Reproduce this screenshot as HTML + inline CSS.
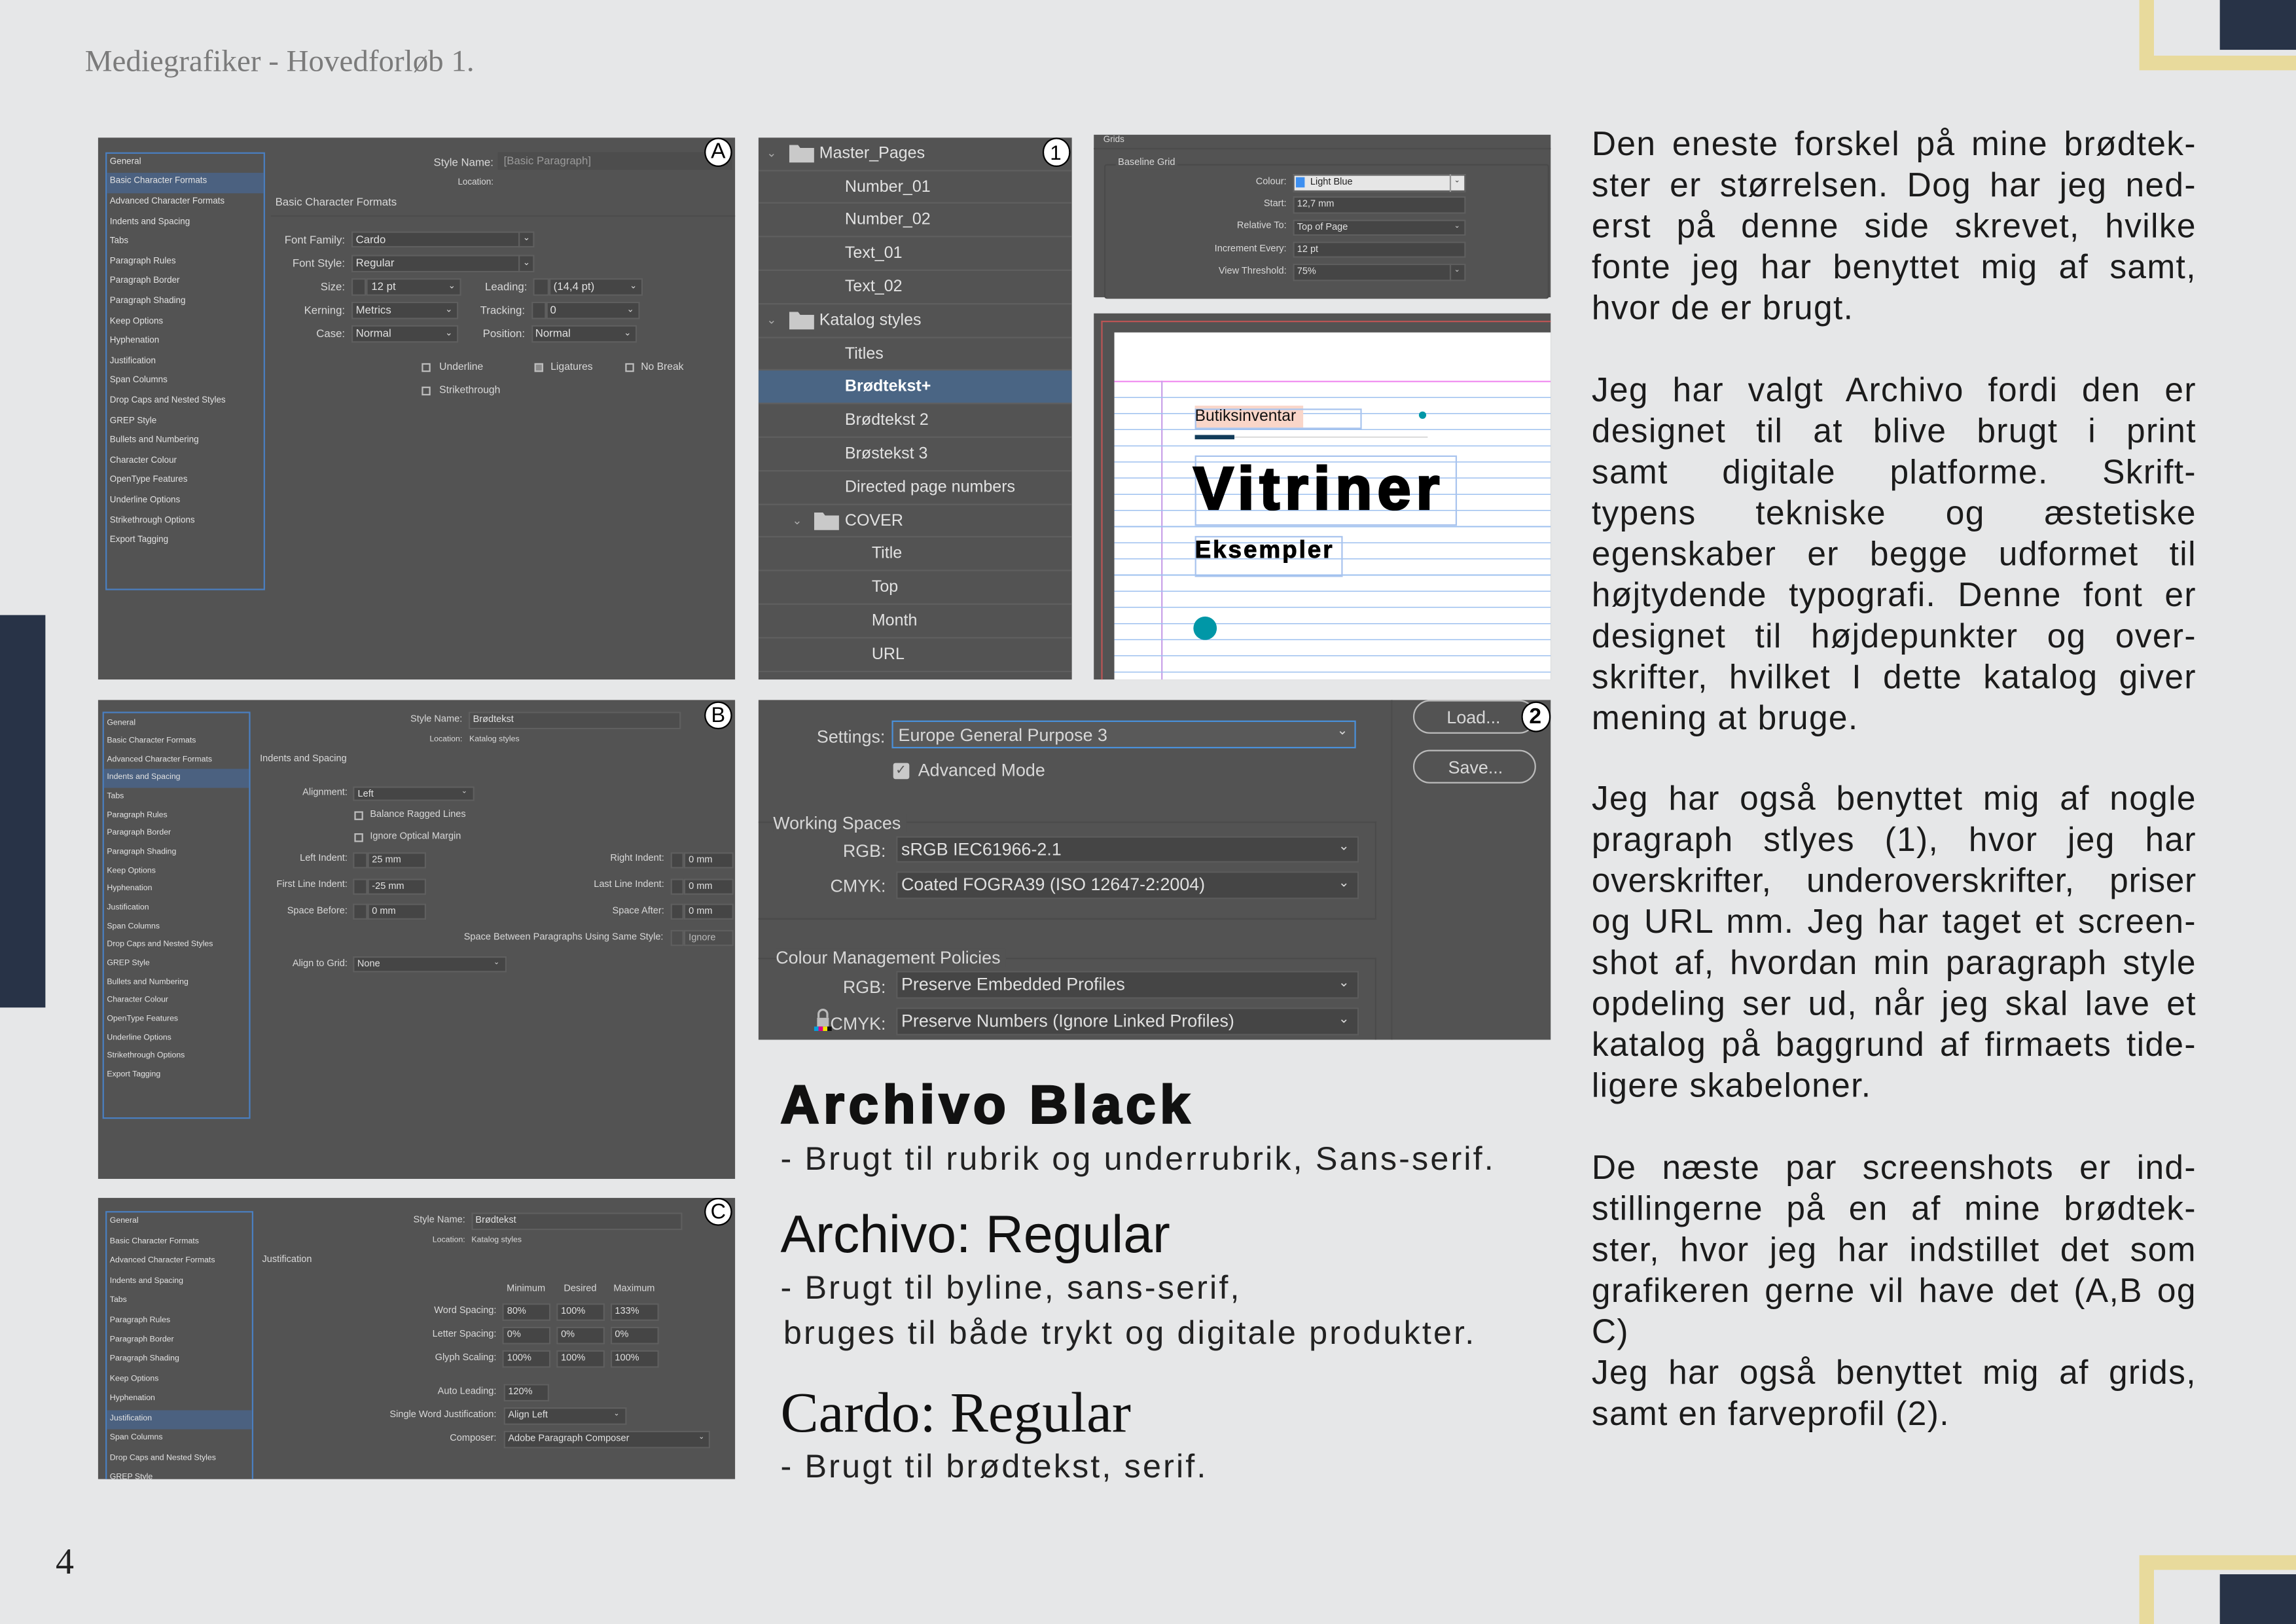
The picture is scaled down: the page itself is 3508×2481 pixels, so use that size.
<!DOCTYPE html>
<html><head><meta charset="utf-8">
<style>
html,body{margin:0;padding:0;width:3508px;height:2480px;overflow:hidden;background:#e6e7e8}
#w{position:absolute;left:0;top:0;width:1568px;height:1109px;transform:scale(2.23724);transform-origin:0 0;background:#e6e7e8;font-family:"Liberation Sans",sans-serif}
.a{position:absolute}
.c{position:absolute;transform:translateY(-50%);white-space:nowrap;line-height:1}
.r{position:absolute;transform:translate(-100%,-50%);white-space:nowrap;line-height:1}
.p{position:absolute;background:#535353}
.sb{position:absolute;border:1px solid #4a7fc1;box-sizing:border-box;background:#535353;overflow:hidden}
.sb div{color:#e2e2e2;white-space:nowrap;padding-left:2px}
.sb .h{background:#4b6180}
.f{position:absolute;background:#454545;border:1px solid #5f5f5f;box-sizing:border-box;color:#e0e0e0;white-space:nowrap;overflow:hidden}
.cb{position:absolute;border:1px solid #bdbdbd;box-sizing:border-box;width:6px;height:6px}
.circ{position:absolute;border-radius:50%;background:#fff;border:1.3px solid #000;box-sizing:border-box;color:#000;text-align:center;font-family:"Liberation Sans",sans-serif}
.dk{color:#d8d8d8}
.rt{position:absolute;left:1087px;width:413px;height:28px;line-height:28px;font-size:23px;color:#1b1b1b;text-align:justify;text-align-last:justify;letter-spacing:.6px;white-space:nowrap}
.rt.l{text-align-last:left}
.row{height:22.8px;line-height:22.8px;border-bottom:1px solid #5f5f5f;box-sizing:border-box;color:#e2e2e2;font-size:11.2px;position:relative;white-space:nowrap}
.s{position:absolute;transform:translateY(-50%);white-space:nowrap;line-height:1;font-size:22.5px;color:#222;letter-spacing:1.4px}
</style></head><body><div id="w">

<div class="c" style="left:58px;top:42px;font-family:'Liberation Serif',serif;font-size:21px;color:#7b7b7b">Mediegrafiker - Hovedforløb 1.</div>
<div class="c" style="left:38px;top:1067px;font-family:'Liberation Serif',serif;font-size:25px;color:#222">4</div>

<div class="a" style="left:0;top:420px;width:31px;height:268px;background:#283347"></div>
<div class="a" style="left:1461px;top:0;width:107px;height:48px;background:#e8da9c"></div>
<div class="a" style="left:1471px;top:0;width:97px;height:38px;background:#e6e7e8"></div>
<div class="a" style="left:1516px;top:0;width:52px;height:34px;background:#283347"></div>
<div class="a" style="left:1461px;top:1062px;width:107px;height:47px;background:#e8da9c"></div>
<div class="a" style="left:1471px;top:1072px;width:97px;height:37px;background:#e6e7e8"></div>
<div class="a" style="left:1516px;top:1075px;width:52px;height:34px;background:#283347"></div>

<!-- PANEL A -->
<div class="p" style="left:67px;top:94px;width:435px;height:370px"></div>
<div class="sb" style="left:72px;top:103.5px;width:109px;height:299px;padding-top:.4px;font-size:6px">
<div style="height:13.6px;line-height:13.6px">General</div>
<div class="h" style="height:13.6px;line-height:13.6px">Basic Character Formats</div>
<div style="height:13.6px;line-height:13.6px">Advanced Character Formats</div>
<div style="height:13.6px;line-height:13.6px">Indents and Spacing</div>
<div style="height:13.6px;line-height:13.6px">Tabs</div>
<div style="height:13.6px;line-height:13.6px">Paragraph Rules</div>
<div style="height:13.6px;line-height:13.6px">Paragraph Border</div>
<div style="height:13.6px;line-height:13.6px">Paragraph Shading</div>
<div style="height:13.6px;line-height:13.6px">Keep Options</div>
<div style="height:13.6px;line-height:13.6px">Hyphenation</div>
<div style="height:13.6px;line-height:13.6px">Justification</div>
<div style="height:13.6px;line-height:13.6px">Span Columns</div>
<div style="height:13.6px;line-height:13.6px">Drop Caps and Nested Styles</div>
<div style="height:13.6px;line-height:13.6px">GREP Style</div>
<div style="height:13.6px;line-height:13.6px">Bullets and Numbering</div>
<div style="height:13.6px;line-height:13.6px">Character Colour</div>
<div style="height:13.6px;line-height:13.6px">OpenType Features</div>
<div style="height:13.6px;line-height:13.6px">Underline Options</div>
<div style="height:13.6px;line-height:13.6px">Strikethrough Options</div>
<div style="height:13.6px;line-height:13.6px">Export Tagging</div>
</div>
<div class="r dk" style="left:337px;top:110.5px;font-size:7.5px">Style Name:</div>
<div class="a" style="left:340px;top:104px;width:160px;height:12px;background:#4d4d4d"></div>
<div class="c" style="left:344px;top:110px;font-size:7.5px;color:#9a9a9a">[Basic Paragraph]</div>
<div class="r dk" style="left:337px;top:125px;font-size:6px">Location:</div>
<div class="c dk" style="left:188px;top:138px;font-size:7.5px">Basic Character Formats</div>
<div class="a" style="left:185px;top:147px;width:317px;height:1px;background:#4c4c4c"></div>

<div class="r dk" style="left:235.6px;top:163.8px;font-size:7.5px">Font Family:</div>
<div class="f" style="left:240px;top:157.7px;width:125px;height:11.7px;font-size:7.5px;line-height:10px;padding-left:2px">Cardo</div>
<div class="a" style="left:354px;top:158px;width:1px;height:11px;background:#5f5f5f"></div>
<div class="c dk" style="left:357px;top:163px;font-size:6px">⌄</div>
<div class="r dk" style="left:235.6px;top:180.3px;font-size:7.5px">Font Style:</div>
<div class="f" style="left:240px;top:174px;width:125px;height:11.7px;font-size:7.5px;line-height:10px;padding-left:2px">Regular</div>
<div class="a" style="left:354px;top:174px;width:1px;height:11px;background:#5f5f5f"></div>
<div class="c dk" style="left:357px;top:179.5px;font-size:6px">⌄</div>

<div class="r dk" style="left:235.6px;top:196px;font-size:7.5px">Size:</div>
<div class="f" style="left:240px;top:190px;width:9.6px;height:12px"></div>
<div class="f" style="left:249.6px;top:190px;width:65px;height:12px;font-size:7.5px;line-height:10px;padding-left:3px">12 pt</div>
<div class="c dk" style="left:306px;top:195.5px;font-size:6px">⌄</div>
<div class="r dk" style="left:360px;top:196px;font-size:7.5px">Leading:</div>
<div class="f" style="left:364px;top:190px;width:11px;height:12px"></div>
<div class="f" style="left:375px;top:190px;width:64px;height:12px;font-size:7.5px;line-height:10px;padding-left:2px">(14,4 pt)</div>
<div class="c dk" style="left:430px;top:195.5px;font-size:6px">⌄</div>

<div class="r dk" style="left:235.6px;top:212.2px;font-size:7.5px">Kerning:</div>
<div class="f" style="left:240px;top:206.2px;width:73px;height:12px;font-size:7.5px;line-height:10px;padding-left:2px">Metrics</div>
<div class="c dk" style="left:304px;top:211.5px;font-size:6px">⌄</div>
<div class="r dk" style="left:358.5px;top:212.2px;font-size:7.5px">Tracking:</div>
<div class="f" style="left:362.7px;top:206.2px;width:10px;height:12px"></div>
<div class="f" style="left:372.7px;top:206.2px;width:64.3px;height:12px;font-size:7.5px;line-height:10px;padding-left:2px">0</div>
<div class="c dk" style="left:428px;top:211.5px;font-size:6px">⌄</div>

<div class="r dk" style="left:235.6px;top:228px;font-size:7.5px">Case:</div>
<div class="f" style="left:240px;top:222px;width:73px;height:12px;font-size:7.5px;line-height:10px;padding-left:2px">Normal</div>
<div class="c dk" style="left:304px;top:227.5px;font-size:6px">⌄</div>
<div class="r dk" style="left:358.5px;top:228px;font-size:7.5px">Position:</div>
<div class="f" style="left:362.5px;top:222px;width:72.5px;height:12px;font-size:7.5px;line-height:10px;padding-left:2px">Normal</div>
<div class="c dk" style="left:426px;top:227.5px;font-size:6px">⌄</div>

<div class="cb" style="left:288.4px;top:247.5px"></div><div class="c dk" style="left:300px;top:250.5px;font-size:7px">Underline</div>
<div class="cb" style="left:365.3px;top:247.5px;background:#8a8a8a"></div><div class="c dk" style="left:376px;top:250.5px;font-size:7px">Ligatures</div>
<div class="cb" style="left:426.7px;top:247.5px"></div><div class="c dk" style="left:437.7px;top:250.5px;font-size:7px">No Break</div>
<div class="cb" style="left:288.4px;top:263.5px"></div><div class="c dk" style="left:300px;top:266.5px;font-size:7px">Strikethrough</div>
<div class="circ" style="left:481px;top:93.5px;width:19px;height:20px;font-size:15px;line-height:18px">A</div>

<!-- PANEL B -->
<div class="p" style="left:67px;top:477.5px;width:435px;height:327px"></div>
<div class="sb" style="left:70px;top:486px;width:101px;height:278px;padding-top:.5px;font-size:5.5px">
<div style="height:12.66px;line-height:12.66px">General</div>
<div style="height:12.66px;line-height:12.66px">Basic Character Formats</div>
<div style="height:12.66px;line-height:12.66px">Advanced Character Formats</div>
<div class="h" style="height:12.66px;line-height:12.66px">Indents and Spacing</div>
<div style="height:12.66px;line-height:12.66px">Tabs</div>
<div style="height:12.66px;line-height:12.66px">Paragraph Rules</div>
<div style="height:12.66px;line-height:12.66px">Paragraph Border</div>
<div style="height:12.66px;line-height:12.66px">Paragraph Shading</div>
<div style="height:12.66px;line-height:12.66px">Keep Options</div>
<div style="height:12.66px;line-height:12.66px">Hyphenation</div>
<div style="height:12.66px;line-height:12.66px">Justification</div>
<div style="height:12.66px;line-height:12.66px">Span Columns</div>
<div style="height:12.66px;line-height:12.66px">Drop Caps and Nested Styles</div>
<div style="height:12.66px;line-height:12.66px">GREP Style</div>
<div style="height:12.66px;line-height:12.66px">Bullets and Numbering</div>
<div style="height:12.66px;line-height:12.66px">Character Colour</div>
<div style="height:12.66px;line-height:12.66px">OpenType Features</div>
<div style="height:12.66px;line-height:12.66px">Underline Options</div>
<div style="height:12.66px;line-height:12.66px">Strikethrough Options</div>
<div style="height:12.66px;line-height:12.66px">Export Tagging</div>
</div>
<div class="r dk" style="left:315.7px;top:492.4px;font-size:6.5px">Style Name:</div>
<div class="f" style="left:320px;top:486.2px;width:144.5px;height:11.8px;font-size:6.5px;line-height:10px;padding-left:2px;background:#4d4d4d">Brødtekst</div>
<div class="r dk" style="left:315.7px;top:506.2px;font-size:5.5px">Location:</div>
<div class="c dk" style="left:320.5px;top:506.2px;font-size:5.5px">Katalog styles</div>
<div class="c dk" style="left:177.5px;top:518.6px;font-size:6.5px">Indents and Spacing</div>
<div class="r dk" style="left:237.3px;top:542px;font-size:6.5px">Alignment:</div>
<div class="f" style="left:241.3px;top:536.6px;width:82.4px;height:10.7px;font-size:6.5px;line-height:9px;padding-left:2px">Left</div>
<div class="c dk" style="left:315px;top:541px;font-size:5px">⌄</div>
<div class="cb" style="left:242px;top:554px;width:5.5px;height:5.5px"></div><div class="c dk" style="left:252.7px;top:557px;font-size:6.5px">Balance Ragged Lines</div>
<div class="cb" style="left:242px;top:569px;width:5.5px;height:5.5px"></div><div class="c dk" style="left:252.7px;top:572px;font-size:6.5px">Ignore Optical Margin</div>

<div class="r dk" style="left:237.3px;top:587.3px;font-size:6.5px">Left Indent:</div>
<div class="f" style="left:241px;top:581.8px;width:10px;height:11px"></div>
<div class="f" style="left:251px;top:581.8px;width:39.6px;height:11px;font-size:6.5px;line-height:9px;padding-left:2px">25 mm</div>
<div class="r dk" style="left:237.3px;top:605.2px;font-size:6.5px">First Line Indent:</div>
<div class="f" style="left:241px;top:599.7px;width:10px;height:11px"></div>
<div class="f" style="left:251px;top:599.7px;width:39.6px;height:11px;font-size:6.5px;line-height:9px;padding-left:2px">-25 mm</div>
<div class="r dk" style="left:237.3px;top:622.8px;font-size:6.5px">Space Before:</div>
<div class="f" style="left:241px;top:617.3px;width:10px;height:11px"></div>
<div class="f" style="left:251px;top:617.3px;width:39.6px;height:11px;font-size:6.5px;line-height:9px;padding-left:2px">0 mm</div>

<div class="r dk" style="left:453.6px;top:587.3px;font-size:6.5px">Right Indent:</div>
<div class="f" style="left:457.6px;top:581.8px;width:9.7px;height:11px"></div>
<div class="f" style="left:467.3px;top:581.8px;width:34.2px;height:11px;font-size:6.5px;line-height:9px;padding-left:2px">0 mm</div>
<div class="r dk" style="left:453.6px;top:605.2px;font-size:6.5px">Last Line Indent:</div>
<div class="f" style="left:457.6px;top:599.7px;width:9.7px;height:11px"></div>
<div class="f" style="left:467.3px;top:599.7px;width:34.2px;height:11px;font-size:6.5px;line-height:9px;padding-left:2px">0 mm</div>
<div class="r dk" style="left:453.6px;top:622.8px;font-size:6.5px">Space After:</div>
<div class="f" style="left:457.6px;top:617.3px;width:9.7px;height:11px"></div>
<div class="f" style="left:467.3px;top:617.3px;width:34.2px;height:11px;font-size:6.5px;line-height:9px;padding-left:2px">0 mm</div>
<div class="r dk" style="left:453px;top:640.7px;font-size:6.5px">Space Between Paragraphs Using Same Style:</div>
<div class="f" style="left:457.6px;top:635.2px;width:9.7px;height:11px;background:#4e4e4e"></div>
<div class="f" style="left:467.3px;top:635.2px;width:34.2px;height:11px;font-size:6.5px;line-height:9px;padding-left:2px;background:#4e4e4e;color:#bbb">Ignore</div>
<div class="r dk" style="left:237.3px;top:658.7px;font-size:6.5px">Align to Grid:</div>
<div class="f" style="left:241px;top:653.2px;width:105px;height:11px;font-size:6.5px;line-height:9px;padding-left:2px">None</div>
<div class="c dk" style="left:337px;top:657.5px;font-size:5px">⌄</div>
<div class="circ" style="left:481px;top:478.5px;width:19px;height:19.5px;font-size:14.5px;line-height:18px">B</div>

<!-- PANEL C -->
<div class="p" style="left:67px;top:817.5px;width:435px;height:192px;overflow:hidden">
<div class="sb" style="left:5px;top:9px;width:100.6px;height:200px;padding-top:.9px;font-size:5.5px">
<div style="height:13.45px;line-height:13.45px">General</div>
<div style="height:13.45px;line-height:13.45px">Basic Character Formats</div>
<div style="height:13.45px;line-height:13.45px">Advanced Character Formats</div>
<div style="height:13.45px;line-height:13.45px">Indents and Spacing</div>
<div style="height:13.45px;line-height:13.45px">Tabs</div>
<div style="height:13.45px;line-height:13.45px">Paragraph Rules</div>
<div style="height:13.45px;line-height:13.45px">Paragraph Border</div>
<div style="height:13.45px;line-height:13.45px">Paragraph Shading</div>
<div style="height:13.45px;line-height:13.45px">Keep Options</div>
<div style="height:13.45px;line-height:13.45px">Hyphenation</div>
<div class="h" style="height:13.45px;line-height:13.45px">Justification</div>
<div style="height:13.45px;line-height:13.45px">Span Columns</div>
<div style="height:13.45px;line-height:13.45px">Drop Caps and Nested Styles</div>
<div style="height:13.45px;line-height:13.45px">GREP Style</div>
</div></div>
<div class="r dk" style="left:317.7px;top:833.5px;font-size:6.5px">Style Name:</div>
<div class="f" style="left:321.7px;top:827.5px;width:144px;height:12px;font-size:6.5px;line-height:10px;padding-left:2px;background:#4d4d4d">Brødtekst</div>
<div class="r dk" style="left:317.7px;top:848.4px;font-size:5.5px">Location:</div>
<div class="c dk" style="left:322px;top:848.4px;font-size:5.5px">Katalog styles</div>
<div class="c dk" style="left:179px;top:861px;font-size:6.5px">Justification</div>
<div class="c dk" style="left:346px;top:880.8px;font-size:6.5px">Minimum</div>
<div class="c dk" style="left:385px;top:880.8px;font-size:6.5px">Desired</div>
<div class="c dk" style="left:419px;top:880.8px;font-size:6.5px">Maximum</div>
<div class="r dk" style="left:339px;top:896.3px;font-size:6.5px">Word Spacing:</div>
<div class="f" style="left:343.3px;top:890.3px;width:33px;height:12px;font-size:6.5px;line-height:10px;padding-left:2px">80%</div>
<div class="f" style="left:380.1px;top:890.3px;width:33.4px;height:12px;font-size:6.5px;line-height:10px;padding-left:2px">100%</div>
<div class="f" style="left:416.9px;top:890.3px;width:33.6px;height:12px;font-size:6.5px;line-height:10px;padding-left:2px">133%</div>
<div class="r dk" style="left:339px;top:912.2px;font-size:6.5px">Letter Spacing:</div>
<div class="f" style="left:343.3px;top:906.2px;width:33px;height:12px;font-size:6.5px;line-height:10px;padding-left:2px">0%</div>
<div class="f" style="left:380.1px;top:906.2px;width:33.4px;height:12px;font-size:6.5px;line-height:10px;padding-left:2px">0%</div>
<div class="f" style="left:416.9px;top:906.2px;width:33.6px;height:12px;font-size:6.5px;line-height:10px;padding-left:2px">0%</div>
<div class="r dk" style="left:339px;top:928px;font-size:6.5px">Glyph Scaling:</div>
<div class="f" style="left:343.3px;top:922px;width:33px;height:12px;font-size:6.5px;line-height:10px;padding-left:2px">100%</div>
<div class="f" style="left:380.1px;top:922px;width:33.4px;height:12px;font-size:6.5px;line-height:10px;padding-left:2px">100%</div>
<div class="f" style="left:416.9px;top:922px;width:33.6px;height:12px;font-size:6.5px;line-height:10px;padding-left:2px">100%</div>
<div class="r dk" style="left:339px;top:950.8px;font-size:6.5px">Auto Leading:</div>
<div class="f" style="left:344px;top:945px;width:31px;height:12px;font-size:6.5px;line-height:10px;padding-left:2px">120%</div>
<div class="r dk" style="left:339px;top:966.7px;font-size:6.5px">Single Word Justification:</div>
<div class="f" style="left:344px;top:960.8px;width:84px;height:12px;font-size:6.5px;line-height:10px;padding-left:2px">Align Left</div>
<div class="c dk" style="left:419px;top:965.5px;font-size:5px">⌄</div>
<div class="r dk" style="left:339px;top:983px;font-size:6.5px">Composer:</div>
<div class="f" style="left:344px;top:977px;width:141px;height:12px;font-size:6.5px;line-height:10px;padding-left:2px">Adobe Paragraph Composer</div>
<div class="c dk" style="left:477px;top:982px;font-size:5px">⌄</div>
<div class="circ" style="left:481px;top:817.5px;width:19px;height:19.5px;font-size:14.5px;line-height:18px">C</div>

<!-- PANEL 1 -->
<div class="p" style="left:517.5px;top:93.8px;width:214px;height:370px;overflow:hidden">
<div class="row"><span style="position:absolute;left:6px;color:#aaa;font-size:8px">⌄</span><svg style="position:absolute;left:21px;top:4px" width="17" height="13" viewBox="0 0 17 13"><path d="M0 1h6l1.5 2H17v10H0z" fill="#c9c9c9"/></svg><span style="position:absolute;left:42px">Master_Pages</span></div>
<div class="row"><span style="position:absolute;left:59.5px">Number_01</span></div>
<div class="row"><span style="position:absolute;left:59.5px">Number_02</span></div>
<div class="row"><span style="position:absolute;left:59.5px">Text_01</span></div>
<div class="row"><span style="position:absolute;left:59.5px">Text_02</span></div>
<div class="row"><span style="position:absolute;left:6px;color:#aaa;font-size:8px">⌄</span><svg style="position:absolute;left:21px;top:4px" width="17" height="13" viewBox="0 0 17 13"><path d="M0 1h6l1.5 2H17v10H0z" fill="#c9c9c9"/></svg><span style="position:absolute;left:42px">Katalog styles</span></div>
<div class="row"><span style="position:absolute;left:59.5px">Titles</span></div>
<div class="row" style="background:#4a6584;font-weight:bold;color:#fff"><span style="position:absolute;left:59.5px">Brødtekst+</span></div>
<div class="row"><span style="position:absolute;left:59.5px">Brødtekst 2</span></div>
<div class="row"><span style="position:absolute;left:59.5px">Brøstekst 3</span></div>
<div class="row"><span style="position:absolute;left:59.5px">Directed page numbers</span></div>
<div class="row"><span style="position:absolute;left:23.5px;color:#aaa;font-size:8px">⌄</span><svg style="position:absolute;left:38.5px;top:4px" width="17" height="13" viewBox="0 0 17 13"><path d="M0 1h6l1.5 2H17v10H0z" fill="#c9c9c9"/></svg><span style="position:absolute;left:59.5px">COVER</span></div>
<div class="row"><span style="position:absolute;left:77.8px">Title</span></div>
<div class="row"><span style="position:absolute;left:77.8px">Top</span></div>
<div class="row"><span style="position:absolute;left:77.8px">Month</span></div>
<div class="row"><span style="position:absolute;left:77.8px">URL</span></div>
</div>
<div class="circ" style="left:711.5px;top:94px;width:19px;height:19.5px;font-size:14px;line-height:18px">1</div>

<!-- GRIDS -->
<div class="p" style="left:747px;top:91.8px;width:311.5px;height:111px"></div>
<div class="a" style="left:747px;top:101px;width:311.5px;height:1px;background:#4c4c4c"></div>
<div class="c dk" style="left:753.5px;top:96.2px;font-size:6px">Grids</div>
<div class="a" style="left:754px;top:112px;width:304px;height:92px;border:1px solid #4a4a4a;border-radius:2px;box-sizing:border-box"></div>
<div class="c dk" style="left:762px;top:112px;font-size:6.5px;background:#535353;padding:0 1.5px">Baseline Grid</div>
<div class="r dk" style="left:878.6px;top:124.8px;font-size:6.5px">Colour:</div>
<div class="f" style="left:882.8px;top:119px;width:118px;height:11.6px;background:#e6e6e6;color:#222;font-size:6.5px;line-height:10px;padding-left:11px">Light Blue</div>
<div class="a" style="left:884.8px;top:121px;width:6px;height:7px;background:#3d8ff0"></div>
<div class="a" style="left:990px;top:119px;width:1px;height:11.6px;background:#999"></div>
<div class="c" style="left:993px;top:124px;font-size:5px;color:#333">⌄</div>
<div class="r dk" style="left:878.6px;top:139.8px;font-size:6.5px">Start:</div>
<div class="f" style="left:882.8px;top:134px;width:118px;height:11.6px;font-size:6.5px;line-height:10px;padding-left:2px">12,7 mm</div>
<div class="r dk" style="left:878.6px;top:155.3px;font-size:6.5px">Relative To:</div>
<div class="f" style="left:882.8px;top:149.5px;width:118px;height:11.6px;font-size:6.5px;line-height:10px;padding-left:2px">Top of Page</div>
<div class="c dk" style="left:993px;top:154.5px;font-size:5px">⌄</div>
<div class="r dk" style="left:878.6px;top:170.6px;font-size:6.5px">Increment Every:</div>
<div class="f" style="left:882.8px;top:164.8px;width:118px;height:11.6px;font-size:6.5px;line-height:10px;padding-left:2px">12 pt</div>
<div class="r dk" style="left:878.6px;top:185.8px;font-size:6.5px">View Threshold:</div>
<div class="f" style="left:882.8px;top:180px;width:118px;height:11.6px;font-size:6.5px;line-height:10px;padding-left:2px">75%</div>
<div class="a" style="left:990px;top:180px;width:1px;height:11.6px;background:#5f5f5f"></div>
<div class="c dk" style="left:993px;top:185px;font-size:5px">⌄</div>

<!-- PREVIEW -->
<div class="p" style="left:747px;top:214.2px;width:311.5px;height:249.6px;overflow:hidden">
<div class="a" style="left:5.4px;top:5.3px;width:400px;height:400px;border-left:1px solid #b55;border-top:1px solid #b55"></div>
<div class="a" style="left:13.5px;top:12.8px;width:300px;height:300px;background:#fff"></div>
<div class="a" style="left:13.5px;top:45.5px;width:300px;height:1px;background:#f08ff0"></div>
<div class="a" style="left:46.4px;top:45.5px;width:1px;height:300px;background:#c8a0e8"></div>
<div class="a" style="left:13.5px;top:56.4px;width:300px;height:200px;background:repeating-linear-gradient(to bottom,#9ec0ef 0,#9ec0ef 0.7px,transparent 0.7px,transparent 11.03px)"></div>
</div>
<div class="a" style="left:815.5px;top:276.7px;width:74.7px;height:15px;background:#f9d6c9"></div>
<div class="a" style="left:815.5px;top:278.5px;width:114.5px;height:14px;border:1px solid #a9c4ee;box-sizing:border-box"></div>
<div class="c" style="left:816px;top:284.5px;font-size:11px;color:#111">Butiksinventar</div>
<div class="a" style="left:969px;top:281.2px;width:5px;height:5px;border-radius:50%;background:#0097a7"></div>
<div class="a" style="left:815.5px;top:297.5px;width:159.5px;height:1px;background:#ddd"></div>
<div class="a" style="left:815.5px;top:297.3px;width:27px;height:2.4px;background:#123c5a"></div>
<div class="a" style="left:815.5px;top:311.3px;width:179.5px;height:47.7px;border:1px solid #a9c4ee;box-sizing:border-box"></div>
<div class="c" style="left:815px;top:333.5px;font-size:41px;font-weight:900;color:#000;-webkit-text-stroke:1.5px #000;letter-spacing:3.6px">Vitriner</div>
<div class="a" style="left:815.5px;top:366.4px;width:101.5px;height:27.8px;border:1px solid #a9c4ee;box-sizing:border-box"></div>
<div class="c" style="left:816px;top:376px;font-size:16.5px;font-weight:bold;color:#000;-webkit-text-stroke:.4px #000;letter-spacing:1.3px">Eksempler</div>
<div class="a" style="left:815px;top:421.3px;width:16px;height:16px;border-radius:50%;background:#0097a7"></div>

<!-- COLOUR SETTINGS -->
<div class="p" style="left:517.5px;top:477.6px;width:541px;height:232.4px"></div>
<div class="a" style="left:949.8px;top:477.6px;width:1px;height:232.4px;background:#4d4d4d"></div>
<div class="r dk" style="left:604.5px;top:503px;font-size:12px">Settings:</div>
<div class="a" style="left:609.4px;top:491.5px;width:316.6px;height:19.2px;border:1px solid #4a90d9;box-sizing:border-box;background:#595959"></div>
<div class="c dk" style="left:613.5px;top:502px;font-size:12px">Europe General Purpose 3</div>
<div class="c dk" style="left:913px;top:499px;font-size:9px">⌄</div>
<div class="a" style="left:610.4px;top:520.5px;width:10.6px;height:11px;background:#c9c9c9;border-radius:1.5px"></div>
<div class="c" style="left:611.5px;top:526px;font-size:9px;color:#555">✓</div>
<div class="c dk" style="left:627px;top:526px;font-size:12px">Advanced Mode</div>
<div class="a" style="left:517.5px;top:561px;width:422.5px;height:67px;border-top:1px solid #4b4b4b;border-right:1px solid #4b4b4b;border-bottom:1px solid #4b4b4b;box-sizing:border-box"></div>
<div class="c dk" style="left:528px;top:561.5px;font-size:12px;background:#535353;padding-right:4px">Working Spaces</div>
<div class="r dk" style="left:605px;top:580.8px;font-size:12px">RGB:</div>
<div class="f" style="left:611.5px;top:570.8px;width:316.2px;height:18.4px;font-size:12px;line-height:16.4px;padding-left:3px;border-color:#5c5c5c">sRGB IEC61966-2.1</div>
<div class="c dk" style="left:914px;top:578px;font-size:9px">⌄</div>
<div class="r dk" style="left:605px;top:605.4px;font-size:12px">CMYK:</div>
<div class="f" style="left:611.5px;top:595px;width:316.2px;height:18.8px;font-size:12px;line-height:16.8px;padding-left:3px;border-color:#5c5c5c">Coated FOGRA39 (ISO 12647-2:2004)</div>
<div class="c dk" style="left:914px;top:602.5px;font-size:9px">⌄</div>
<div class="a" style="left:517.5px;top:654px;width:422.5px;height:56px;border-top:1px solid #4b4b4b;border-right:1px solid #4b4b4b;box-sizing:border-box"></div>
<div class="c dk" style="left:529.8px;top:654px;font-size:12px;background:#535353;padding-right:4px">Colour Management Policies</div>
<div class="r dk" style="left:605px;top:673.9px;font-size:12px">RGB:</div>
<div class="f" style="left:611.5px;top:663.4px;width:316.2px;height:18.9px;font-size:12px;line-height:16.9px;padding-left:3px;border-color:#5c5c5c">Preserve Embedded Profiles</div>
<div class="c dk" style="left:914px;top:671px;font-size:9px">⌄</div>
<div class="r dk" style="left:605px;top:698.5px;font-size:12px">CMYK:</div>
<div class="f" style="left:611.5px;top:688px;width:316.2px;height:19px;font-size:12px;line-height:17px;padding-left:3px;border-color:#5c5c5c">Preserve Numbers (Ignore Linked Profiles)</div>
<div class="c dk" style="left:914px;top:695.5px;font-size:9px">⌄</div>
<svg class="a" style="left:555px;top:688px" width="14" height="17" viewBox="0 0 14 17"><path d="M4 7V4.5a3 3 0 0 1 6 0V7" fill="none" stroke="#bbb" stroke-width="1.4"/><rect x="3" y="7" width="8" height="6" fill="#bbb"/><rect x="1" y="13" width="3" height="3" fill="#00a0e0"/><rect x="4" y="13" width="3" height="3" fill="#e0008a"/><rect x="7" y="13" width="3" height="3" fill="#f5e400"/><rect x="10" y="13" width="3" height="3" fill="#111"/></svg>
<div class="a" style="left:965px;top:477.6px;width:83.7px;height:23.9px;border:1.2px solid #bbb;border-radius:12px;box-sizing:border-box"></div>
<div class="c dk" style="left:988px;top:490px;font-size:12px">Load...</div>
<div class="a" style="left:965px;top:511.5px;width:84px;height:23.9px;border:1.2px solid #bbb;border-radius:12px;box-sizing:border-box"></div>
<div class="c dk" style="left:989px;top:524px;font-size:12px">Save...</div>
<div class="circ" style="left:1038.5px;top:479px;width:20px;height:20.5px;font-size:15px;line-height:19px;font-weight:bold">2</div>

<!-- FONT SAMPLES -->
<div class="c" style="left:533px;top:755px;font-size:36.5px;font-weight:900;color:#111;-webkit-text-stroke:1.3px #111;letter-spacing:3px">Archivo Black</div>
<div class="s" style="left:533px;top:792px">- Brugt til rubrik og underrubrik, Sans-serif.</div>
<div class="c" style="left:533px;top:843px;font-size:36px;color:#111;letter-spacing:0">Archivo: Regular</div>
<div class="s" style="left:533px;top:880px">- Brugt til byline, sans-serif,</div>
<div class="s" style="left:535px;top:911px">bruges til både trykt og digitale produkter.</div>
<div class="c" style="left:533px;top:965px;font-size:39px;color:#111;font-family:'Liberation Serif',serif">Cardo: Regular</div>
<div class="s" style="left:533px;top:1002px">- Brugt til brødtekst, serif.</div>

<!-- RIGHT TEXT -->
<div class="rt" style="top:84px">Den eneste forskel på mine brødtek-</div>
<div class="rt" style="top:112px">ster er størrelsen. Dog har jeg ned-</div>
<div class="rt" style="top:140px">erst på denne side skrevet, hvilke</div>
<div class="rt" style="top:168px">fonte jeg har benyttet mig af samt,</div>
<div class="rt l" style="top:196px">hvor de er brugt.</div>

<div class="rt" style="top:252px">Jeg har valgt Archivo fordi den er</div>
<div class="rt" style="top:280px">designet til at blive brugt i print</div>
<div class="rt" style="top:308px">samt digitale platforme. Skrift-</div>
<div class="rt" style="top:336px">typens tekniske og æstetiske</div>
<div class="rt" style="top:364px">egenskaber er begge udformet til</div>
<div class="rt" style="top:392px">højtydende typografi. Denne font er</div>
<div class="rt" style="top:420px">designet til højdepunkter og over-</div>
<div class="rt" style="top:448px">skrifter, hvilket I dette katalog giver</div>
<div class="rt l" style="top:476px">mening at bruge.</div>

<div class="rt" style="top:531px">Jeg har også benyttet mig af nogle</div>
<div class="rt" style="top:559px">pragraph stlyes (1), hvor jeg har</div>
<div class="rt" style="top:587px;letter-spacing:.3px">overskrifter, underoverskrifter, priser</div>
<div class="rt" style="top:615px">og URL mm. Jeg har taget et screen-</div>
<div class="rt" style="top:643px">shot af, hvordan min paragraph style</div>
<div class="rt" style="top:671px">opdeling ser ud, når jeg skal lave et</div>
<div class="rt" style="top:699px">katalog på baggrund af firmaets tide-</div>
<div class="rt l" style="top:727px">ligere skabeloner.</div>

<div class="rt" style="top:783px">De næste par screenshots er ind-</div>
<div class="rt" style="top:811px">stillingerne på en af mine brødtek-</div>
<div class="rt" style="top:839px">ster, hvor jeg har indstillet det som</div>
<div class="rt" style="top:867px">grafikeren gerne vil have det (A,B og</div>
<div class="rt l" style="top:895px">C)</div>
<div class="rt" style="top:923px">Jeg har også benyttet mig af grids,</div>
<div class="rt l" style="top:951px">samt en farveprofil (2).</div>

</div></body></html>
